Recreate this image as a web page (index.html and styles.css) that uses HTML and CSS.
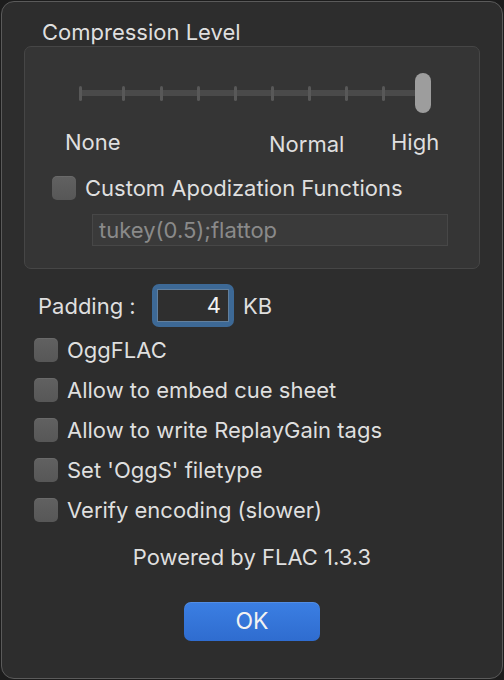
FILE: index.html
```html
<!DOCTYPE html>
<html lang="en">
<head>
<meta charset="utf-8">
<title>FLAC Options</title>
<link rel="stylesheet" href="styles.css">
</head>
<body>
<div class="window">
  <div class="title">Compression Level</div>
  <div class="group">
    <div class="slider">
      <div class="ticks">
        <span class="tick first"></span>
        <span class="tick"></span>
        <span class="tick"></span>
        <span class="tick"></span>
        <span class="tick"></span>
        <span class="tick"></span>
        <span class="tick"></span>
        <span class="tick"></span>
        <span class="tick"></span>
      </div>
      <span class="knob"></span>
    </div>
    <div class="labels">
      <span class="lbl lbl-none">None</span>
      <span class="lbl lbl-normal">Normal</span>
      <span class="lbl lbl-high">High</span>
    </div>
    <div class="check-row custom">
      <span class="box"></span>
      <span class="check-text">Custom Apodization Functions</span>
    </div>
    <div class="textfield">tukey(0.5);flattop</div>
  </div>
  <div class="padding-row">
    <span class="padding-label">Padding :</span>
    <span class="focus-ring"><span class="num-field">4</span></span>
    <span class="unit">KB</span>
  </div>
  <div class="options">
    <div class="check-row"><span class="box"></span><span class="check-text">OggFLAC</span></div>
    <div class="check-row"><span class="box"></span><span class="check-text">Allow to embed cue sheet</span></div>
    <div class="check-row"><span class="box"></span><span class="check-text">Allow to write ReplayGain tags</span></div>
    <div class="check-row"><span class="box"></span><span class="check-text">Set 'OggS' filetype</span></div>
    <div class="check-row"><span class="box"></span><span class="check-text">Verify encoding (slower)</span></div>
  </div>
  <div class="powered">Powered by FLAC 1.3.3</div>
  <div class="ok-button">OK</div>
</div>
</body>
</html>
```
FILE: styles.css
```css
* { box-sizing: border-box; }

html, body {
  margin: 0;
  padding: 0;
  background: #1c1c1c;
}

body {
  font-family: Inter, "Liberation Sans", sans-serif;
  font-size: 22px;
  line-height: 26px;
  color: #dfdfdf;
}

.window {
  width: 502px;
  height: 678px;
  margin: 1px;
  border: 1px solid #5a5a5a;
  border-radius: 13px;
  background: #2d2d2d;
  display: flex;
  flex-direction: column;
  align-items: flex-start;
}

.title {
  margin: 17px 0 0 40px;
  white-space: nowrap;
}

.group {
  margin: 1px 0 0 22px;
  width: 456px;
  height: 223px;
  border: 1px solid #464646;
  border-radius: 7px;
  background: #353535;
  display: flex;
  flex-direction: column;
  align-items: flex-start;
}

/* slider */
.slider {
  position: relative;
  margin: 26px 0 0 53.5px;
  width: 352px;
  height: 40px;
  display: flex;
  align-items: center;
}

.slider::before {
  content: "";
  position: absolute;
  left: 0;
  right: 8px;
  top: 17px;
  height: 6px;
  border-radius: 3px;
  background: #4a4a4a;
}

.ticks {
  position: relative;
  display: flex;
  align-items: center;
  gap: 34.14px;
}

.tick {
  width: 3px;
  height: 15px;
  border-radius: 1.5px;
  background: #585858;
}

.tick.first {
  margin-right: 6.86px;
}

.knob {
  position: absolute;
  right: 0;
  top: 0;
  width: 16px;
  height: 40px;
  border-radius: 8px;
  background: #9d9d9d;
}

.labels {
  margin-top: 16px;
  height: 26px;
  display: flex;
  align-items: flex-start;
  white-space: nowrap;
}

.lbl-none {
  margin-left: 40px;
  width: 204px;
}

.lbl-normal {
  margin-top: 2px;
  width: 122px;
}

/* checkboxes */
.check-row {
  display: flex;
  align-items: center;
  gap: 9px;
  height: 26px;
  white-space: nowrap;
}

.box {
  width: 24px;
  height: 24px;
  border-radius: 5px;
  background: linear-gradient(#616161, #575757);
  box-shadow: inset 0 1px 0 rgba(255, 255, 255, 0.06);
}

.check-row.custom {
  margin: 20px 0 0 27px;
}

.textfield {
  margin: 13px 0 0 67px;
  width: 356px;
  height: 32px;
  border: 1px solid #474747;
  background: #3a3a3a;
  color: #8a8a8a;
  padding-left: 6px;
  line-height: 30px;
  white-space: nowrap;
}

/* padding row */
.padding-row {
  margin: 15px 0 0 36px;
  display: flex;
  align-items: center;
  height: 43px;
}

.padding-label {
  width: 114px;
  white-space: nowrap;
}

.focus-ring {
  width: 82px;
  height: 43px;
  padding: 5px;
  border-radius: 7px;
  background: #3d6996;
}

.num-field {
  display: block;
  height: 33px;
  border: 1px solid #62809e;
  background: #2f2f2f;
  text-align: right;
  padding-right: 7px;
  line-height: 31px;
  color: #f2f2f2;
}

.unit {
  margin-left: 9px;
}

.options {
  margin: 10px 0 0 32px;
  display: flex;
  flex-direction: column;
  gap: 14px;
}

.powered {
  align-self: stretch;
  margin-top: 21px;
  text-align: center;
}

.ok-button {
  align-self: center;
  margin-top: 32px;
  width: 136px;
  height: 39px;
  border-radius: 7px;
  background: linear-gradient(#3b7fe3, #2f6ccf);
  box-shadow: inset 0 1px 0 rgba(255, 255, 255, 0.12);
  color: #f2f2f2;
  font-size: 23px;
  line-height: 39px;
  text-align: center;
}
```
